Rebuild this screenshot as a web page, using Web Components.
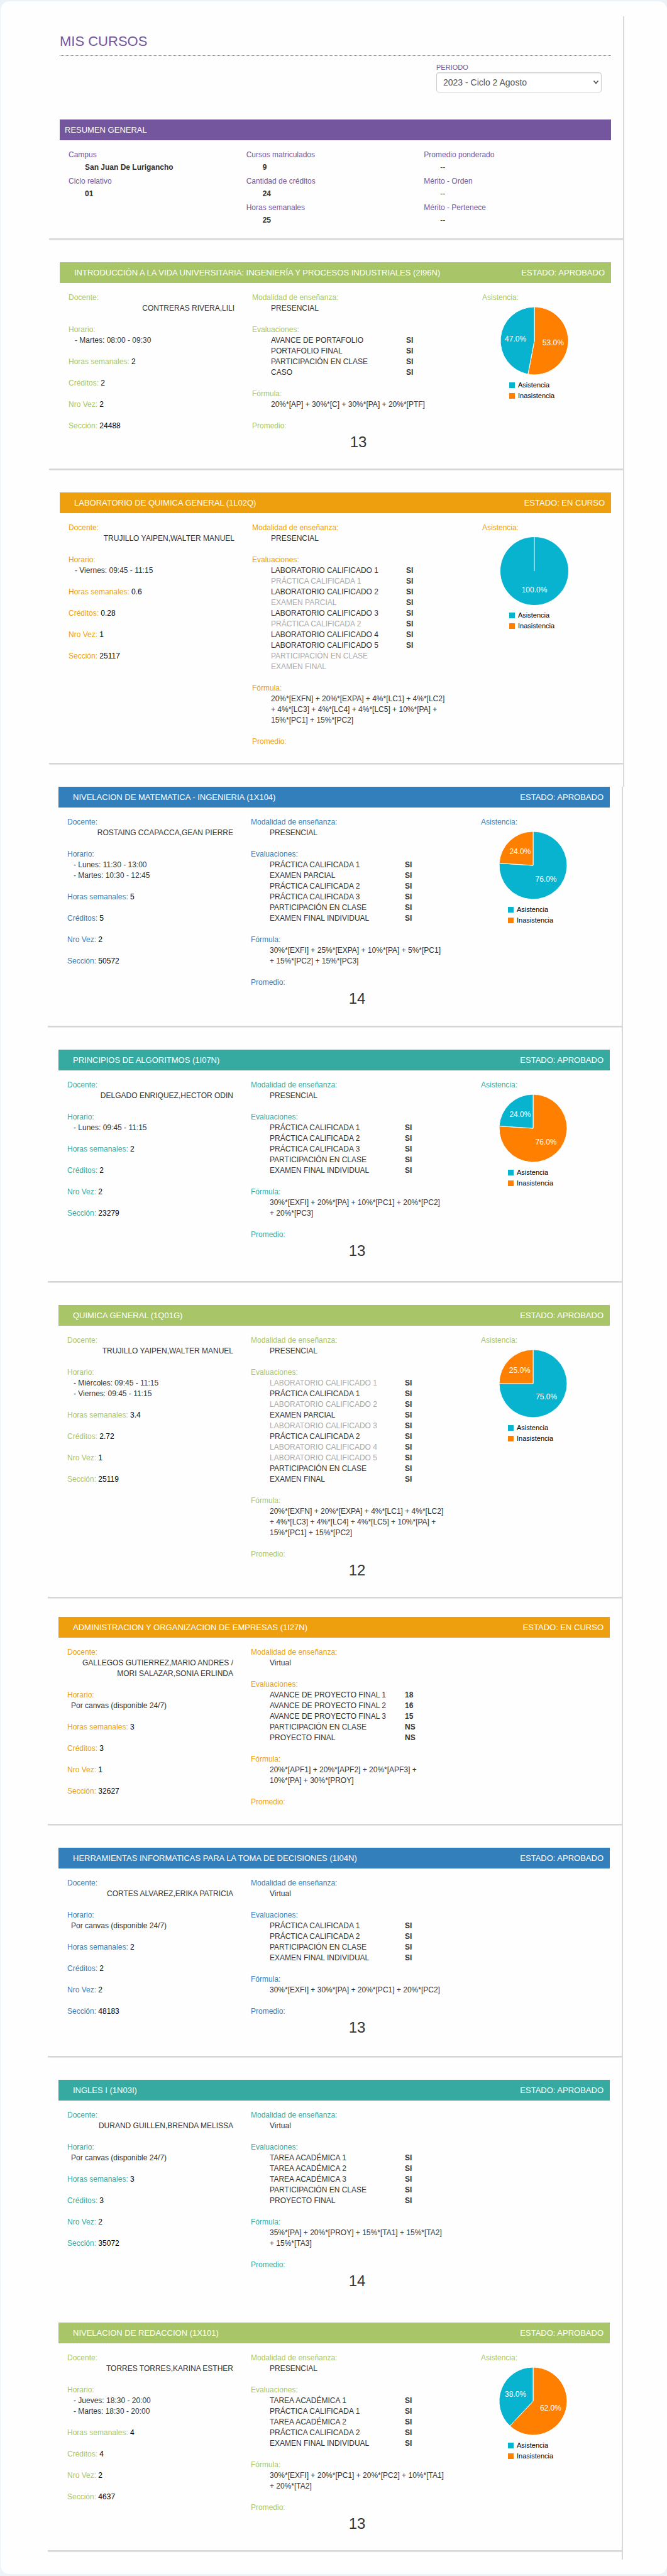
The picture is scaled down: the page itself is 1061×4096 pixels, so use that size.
<!DOCTYPE html>
<html lang="es">
<head>
<meta charset="utf-8">
<meta name="viewport" content="width=device-width, initial-scale=1">
<title>Mis cursos</title>
<style>
  body {
    margin: 0;
    padding: 2px 0 3px 1px;
    background: #ebf3f9;
    color: #333;
    font: 12px/17px "Liberation Sans", Arial, Helvetica, sans-serif;
  }
</style>
</head>
<body>
<page-card>
  <sheet-part id="first">
    <page-heading>MIS CURSOS</page-heading>
    <period-picker></period-picker>
    <general-summary></general-summary>
  </sheet-part>
  <sheet-part id="second" shifted last></sheet-part>
</page-card>

<script>
const shadow = (host, html) => {
  const root = host.attachShadow({ mode: "open" });
  root.innerHTML = html;
  return root;
};

/* White rounded card that holds the whole page */
customElements.define("page-card", class extends HTMLElement {
  constructor() {
    super();
    shadow(this, `
      <style>
        :host { display: block; background: #fefefe; border-radius: 14px; padding: 24px 0 23px; }
      </style>
      <main><slot></slot></main>`);
  }
});

/* Stretch of the page with the vertical rule on its right */
customElements.define("sheet-part", class extends HTMLElement {
  constructor() {
    super();
    shadow(this, `
      <style>
        :host { display: flow-root; margin: 0 68px 0 77px; border-right: 2px solid #d8d8d8; }
        :host([shifted]) { margin: 0 70px 0 75px; }
        :host([last]) { padding-bottom: 12px; }
      </style>
      <slot></slot>`);
  }
});

customElements.define("page-heading", class extends HTMLElement {
  constructor() {
    super();
    shadow(this, `
      <style>
        :host { display: block; padding: 26px 19px 0 17px; }
        h1 { margin: 0; padding-bottom: 8px; border-bottom: 1px dotted #74569e;
             font-size: 22px; line-height: 28px; font-weight: 400; color: #74569e; }
      </style>
      <h1><slot></slot></h1>`);
  }
});

customElements.define("period-picker", class extends HTMLElement {
  constructor() {
    super();
    shadow(this, `
      <style>
        :host { display: flex; flex-direction: column; align-items: flex-end; padding: 11px 34px 43px 0; }
        .field { display: grid; width: 263px; }
        label { font-size: 11px; line-height: 15px; color: #74569e; }
        select, svg { grid-area: 2 / 1; }
        select { appearance: none; box-sizing: border-box; width: 100%; height: 32px; margin: 0; padding: 0 10px;
                 border: 1px solid #ccc; border-radius: 4px; background: #fff; color: #555;
                 font: 14px/20px "Liberation Sans", Arial, sans-serif;
                 box-shadow: inset 0 1px 1px rgba(0, 0, 0, .08); }
        svg { justify-self: end; align-self: center; margin-right: 4px; pointer-events: none; }
      </style>
      <div class="field">
        <label for="period">PERIODO</label>
        <select id="period"><option>2023 - Ciclo 2 Agosto</option></select>
        <svg width="10" height="8" viewBox="0 0 10 8" fill="none" stroke="#444" stroke-width="1.5"><path d="M1.5 1.5 5 5.5 8.5 1.5"/></svg>
      </div>`);
  }
});

/* Coloured title bar: main text on the left, status on the right */
customElements.define("section-bar", class extends HTMLElement {
  constructor() {
    super();
    shadow(this, `
      <style>
        :host { display: flex; justify-content: space-between; align-items: center; height: 33px;
                padding: 0 10px 0 23px; background: var(--accent); color: #fff; font-size: 13px; }
        :host([plain]) { padding-left: 8px; }
        h2 { margin: 0; font: inherit; }
      </style>
      <h2><slot></slot></h2><slot name="status"></slot>`);
  }
});

customElements.define("soft-rule", class extends HTMLElement {
  constructor() {
    super();
    shadow(this, `
      <style>
        :host { display: block; height: 2px; background: #d6d6d6; box-shadow: 0 1px 1px rgba(0, 0, 0, .1); }
      </style>`);
  }
});

customElements.define("general-summary", class extends HTMLElement {
  constructor() {
    super();
    const columns = [
      [["Campus", "San Juan De Lurigancho"], ["Ciclo relativo", "01"]],
      [["Cursos matriculados", "9"], ["Cantidad de créditos", "24"], ["Horas semanales", "25"]],
      [["Promedio ponderado", "--"], ["Mérito - Orden", "--"], ["Mérito - Pertenece", "--"]]
    ];
    const list = rows => `<dl>${rows.map(([k, v]) =>
      `<div><dt>${k}</dt><dd class="${v === "--" ? "none" : ""}">${v}</dd></div>`).join("")}</dl>`;
    shadow(this, `
      <style>
        :host { display: block; --accent: #74569e; }
        section { padding: 0 19px 0 17px; }
        .columns { display: grid; grid-template-columns: repeat(3, 1fr); padding: 13px 15px 19px 14px; }
        dl { display: flex; flex-direction: column; gap: 2px; margin: 0; line-height: 20px; }
        dt { color: var(--accent); }
        dd { margin: 0 0 0 26px; font-weight: 700; }
        .none { font-weight: 400; }
        soft-rule { margin-bottom: 36px; }
      </style>
      <section>
        <section-bar plain>RESUMEN GENERAL</section-bar>
        <div class="columns">${columns.map(list).join("")}</div>
      </section>
      <soft-rule></soft-rule>`);
  }
});

/* Pie of attended and missed classes; the larger slice starts at twelve o'clock */
customElements.define("attendance-pie", class extends HTMLElement {
  connectedCallback() {
    if (this.shadowRoot) return;
    const attended = Number(this.getAttribute("attended"));
    const slices = [{ v: attended, c: "#07b3cf" }, { v: 100 - attended, c: "#ff8000" }]
      .filter(s => s.v > 0).sort((a, b) => b.v - a.v);
    const at = (share, r) => {
      const a = share / 100 * 2 * Math.PI;
      return [55 + r * Math.sin(a), 55 - r * Math.cos(a)];
    };
    let from = 0, shapes = "", texts = "";
    for (const s of slices) {
      const [x1, y1] = at(from, 54), [x2, y2] = at(from + s.v, 54);
      shapes += s.v === 100
        ? `<circle cx="55" cy="55" r="54" fill="${s.c}"/><path d="M55 55V1" stroke="#fff"/>`
        : `<path d="M55 55L${x1} ${y1}A54 54 0 ${s.v > 50 ? 1 : 0} 1 ${x2} ${y2}Z" fill="${s.c}" stroke="#fff"/>`;
      const [tx, ty] = at(from + s.v / 2, 30);
      texts += `<text x="${tx}" y="${ty + 4}">${s.v.toFixed(1)}%</text>`;
      from += s.v;
    }
    shadow(this, `
      <style>
        :host { display: block; }
        svg { display: block; margin: 5px 0 7px 28px; }
        text { fill: #fff; font-size: 12px; text-anchor: middle; }
        ul { list-style: none; margin: 0 0 0 43px; padding: 0; color: #000; font-size: 11px; }
        li { display: flex; align-items: center; gap: 5px; }
        i { width: 9px; height: 9px; background: #07b3cf; }
        .missed { background: #ff8000; }
      </style>
      <svg width="110" height="110" viewBox="0 0 110 110">${shapes}${texts}</svg>
      <ul><li><i></i>Asistencia</li><li><i class="missed"></i>Inasistencia</li></ul>`);
  }
});

const themes = { green: "#a8c668", orange: "#ed9f0e", blue: "#337fbc", teal: "#36aaa0" };

customElements.define("course-card", class extends HTMLElement {
  set course(c) {
    const item = ([name, mark, dim]) =>
      `<tr><td class="${dim ? "dim" : ""}">${name}</td><th>${mark}</th></tr>`;
    const short = (label, value) => `<p class="short">${label}: <b>${value}</b></p>`;
    shadow(this, `
      <style>
        :host { display: block; --accent: ${themes[c.theme]}; }
        article { padding: 0 19px 0 17px; }
        .body { display: grid; grid-template-columns: 292fr 366fr 205fr; padding: 15px 0 ${c.before || 25}px 14px; }
        .body > div { min-width: 0; }
        .facts, .marks { display: flex; flex-direction: column; gap: 17px; padding-right: 28px; }
        h3 { margin: 0; font: inherit; color: var(--accent); }
        p { margin: 0; }
        .teacher { text-align: right; }
        .slot { padding-left: 10px; }
        .online { padding-left: 6px; }
        .short { color: var(--accent); }
        .short b { color: #000; font-weight: 400; }
        .indent { margin-left: 30px; white-space: nowrap; }
        table { border-collapse: collapse; table-layout: fixed; width: 300px; margin-left: 30px; }
        td, th { padding: 0; text-align: left; white-space: nowrap; }
        td { width: 215px; }
        .dim { color: #aaa; }
        .grade { font-size: 24px; line-height: 34px; text-align: center; }
        soft-rule { margin-bottom: ${c.after || 36}px; }
      </style>
      <article>
        <section-bar>${c.name}<span slot="status">ESTADO: ${c.status}</span></section-bar>
        <div class="body">
          <div class="facts">
            <div><h3>Docente:</h3>${c.teacher.map(t => `<p class="teacher">${t}</p>`).join("")}</div>
            <div><h3>Horario:</h3>${c.times
              ? c.times.map(t => `<p class="slot">- ${t}</p>`).join("")
              : `<p class="online">Por canvas (disponible 24/7)</p>`}</div>
            ${short("Horas semanales", c.facts[0])}${short("Créditos", c.facts[1])}
            ${short("Nro Vez", c.facts[2])}${short("Sección", c.facts[3])}
          </div>
          <div class="marks">
            <div><h3>Modalidad de enseñanza:</h3><p class="indent">${c.times ? "PRESENCIAL" : "Virtual"}</p></div>
            <div><h3>Evaluaciones:</h3><table>${c.items.map(item).join("")}</table></div>
            <div><h3>Fórmula:</h3><p class="indent">${c.formula.join("<br>")}</p></div>
            <div><h3>Promedio:</h3>${c.grade ? `<p class="grade">${c.grade}</p>` : ""}</div>
          </div>
          ${c.attended === undefined ? "" : `<div><h3>Asistencia:</h3><attendance-pie attended="${c.attended}"></attendance-pie></div>`}
        </div>
      </article>
      ${c.noRule ? "" : "<soft-rule></soft-rule>"}`);
  }
});

const si = names => names.map(n => [n.replace("~", ""), "SI", n[0] === "~"]);
const courses = [
  { theme: "green", name: "INTRODUCCIÓN A LA VIDA UNIVERSITARIA: INGENIERÍA Y PROCESOS INDUSTRIALES (2I96N)", status: "APROBADO",
    teacher: ["CONTRERAS RIVERA,LILI"], times: ["Martes: 08:00 - 09:30"], facts: ["2", "2", "2", "24488"],
    items: si(["AVANCE DE PORTAFOLIO", "PORTAFOLIO FINAL", "PARTICIPACIÓN EN CLASE", "CASO"]),
    formula: ["20%*[AP] + 30%*[C] + 30%*[PA] + 20%*[PTF]"], grade: 13, attended: 47 },
  { theme: "orange", name: "LABORATORIO DE QUIMICA GENERAL (1L02Q)", status: "EN CURSO",
    teacher: ["TRUJILLO YAIPEN,WALTER MANUEL"], times: ["Viernes: 09:45 - 11:15"], facts: ["0.6", "0.28", "1", "25117"],
    items: [...si(["LABORATORIO CALIFICADO 1", "~PRÁCTICA CALIFICADA 1", "LABORATORIO CALIFICADO 2", "~EXAMEN PARCIAL",
      "LABORATORIO CALIFICADO 3", "~PRÁCTICA CALIFICADA 2", "LABORATORIO CALIFICADO 4", "LABORATORIO CALIFICADO 5"]),
      ["PARTICIPACIÓN EN CLASE", "", true], ["EXAMEN FINAL", "", true]],
    formula: ["20%*[EXFN] + 20%*[EXPA] + 4%*[LC1] + 4%*[LC2]", "+ 4%*[LC3] + 4%*[LC4] + 4%*[LC5] + 10%*[PA] +", "15%*[PC1] + 15%*[PC2]"],
    attended: 100 },
  { theme: "blue", name: "NIVELACION DE MATEMATICA - INGENIERIA (1X104)", status: "APROBADO", before: 26,
    teacher: ["ROSTAING CCAPACCA,GEAN PIERRE"], times: ["Lunes: 11:30 - 13:00", "Martes: 10:30 - 12:45"], facts: ["5", "5", "2", "50572"],
    items: si(["PRÁCTICA CALIFICADA 1", "EXAMEN PARCIAL", "PRÁCTICA CALIFICADA 2", "PRÁCTICA CALIFICADA 3", "PARTICIPACIÓN EN CLASE", "EXAMEN FINAL INDIVIDUAL"]),
    formula: ["30%*[EXFI] + 25%*[EXPA] + 10%*[PA] + 5%*[PC1]", "+ 15%*[PC2] + 15%*[PC3]"], grade: 14, attended: 76 },
  { theme: "teal", name: "PRINCIPIOS DE ALGORITMOS (1I07N)", status: "APROBADO", before: 31,
    teacher: ["DELGADO ENRIQUEZ,HECTOR ODIN"], times: ["Lunes: 09:45 - 11:15"], facts: ["2", "2", "2", "23279"],
    items: si(["PRÁCTICA CALIFICADA 1", "PRÁCTICA CALIFICADA 2", "PRÁCTICA CALIFICADA 3", "PARTICIPACIÓN EN CLASE", "EXAMEN FINAL INDIVIDUAL"]),
    formula: ["30%*[EXFI] + 20%*[PA] + 10%*[PC1] + 20%*[PC2]", "+ 20%*[PC3]"], grade: 13, attended: 24 },
  { theme: "green", name: "QUIMICA GENERAL (1Q01G)", status: "APROBADO", after: 30,
    teacher: ["TRUJILLO YAIPEN,WALTER MANUEL"], times: ["Miércoles: 09:45 - 11:15", "Viernes: 09:45 - 11:15"], facts: ["3.4", "2.72", "1", "25119"],
    items: si(["~LABORATORIO CALIFICADO 1", "PRÁCTICA CALIFICADA 1", "~LABORATORIO CALIFICADO 2", "EXAMEN PARCIAL", "~LABORATORIO CALIFICADO 3",
      "PRÁCTICA CALIFICADA 2", "~LABORATORIO CALIFICADO 4", "~LABORATORIO CALIFICADO 5", "PARTICIPACIÓN EN CLASE", "EXAMEN FINAL"]),
    formula: ["20%*[EXFN] + 20%*[EXPA] + 4%*[LC1] + 4%*[LC2]", "+ 4%*[LC3] + 4%*[LC4] + 4%*[LC5] + 10%*[PA] +", "15%*[PC1] + 15%*[PC2]"],
    grade: 12, attended: 75 },
  { theme: "orange", name: "ADMINISTRACION Y ORGANIZACION DE EMPRESAS (1I27N)", status: "EN CURSO", before: 26,
    teacher: ["GALLEGOS GUTIERREZ,MARIO ANDRES /", "MORI SALAZAR,SONIA ERLINDA"], facts: ["3", "3", "1", "32627"],
    items: [["AVANCE DE PROYECTO FINAL 1", "18"], ["AVANCE DE PROYECTO FINAL 2", "16"], ["AVANCE DE PROYECTO FINAL 3", "15"],
      ["PARTICIPACIÓN EN CLASE", "NS"], ["PROYECTO FINAL", "NS"]],
    formula: ["20%*[APF1] + 20%*[APF2] + 20%*[APF3] +", "10%*[PA] + 30%*[PROY]"] },
  { theme: "blue", name: "HERRAMIENTAS INFORMATICAS PARA LA TOMA DE DECISIONES (1I04N)", status: "APROBADO", before: 28,
    teacher: ["CORTES ALVAREZ,ERIKA PATRICIA"], facts: ["2", "2", "2", "48183"],
    items: si(["PRÁCTICA CALIFICADA 1", "PRÁCTICA CALIFICADA 2", "PARTICIPACIÓN EN CLASE", "EXAMEN FINAL INDIVIDUAL"]),
    formula: ["30%*[EXFI] + 30%*[PA] + 20%*[PC1] + 20%*[PC2]"], grade: 13 },
  { theme: "teal", name: "INGLES I (1N03I)", status: "APROBADO", before: 49, noRule: true,
    teacher: ["DURAND GUILLEN,BRENDA MELISSA"], facts: ["3", "3", "2", "35072"],
    items: si(["TAREA ACADÉMICA 1", "TAREA ACADÉMICA 2", "TAREA ACADÉMICA 3", "PARTICIPACIÓN EN CLASE", "PROYECTO FINAL"]),
    formula: ["35%*[PA] + 20%*[PROY] + 15%*[TA1] + 15%*[TA2]", "+ 15%*[TA3]"], grade: 14 },
  { theme: "green", name: "NIVELACION DE REDACCION (1X101)", status: "APROBADO", after: 1,
    teacher: ["TORRES TORRES,KARINA ESTHER"], times: ["Jueves: 18:30 - 20:00", "Martes: 18:30 - 20:00"], facts: ["4", "4", "2", "4637"],
    items: si(["TAREA ACADÉMICA 1", "PRÁCTICA CALIFICADA 1", "TAREA ACADÉMICA 2", "PRÁCTICA CALIFICADA 2", "EXAMEN FINAL INDIVIDUAL"]),
    formula: ["30%*[EXFI] + 20%*[PC1] + 20%*[PC2] + 10%*[TA1]", "+ 20%*[TA2]"], grade: 13, attended: 38 }
];

courses.forEach((course, i) => {
  const card = document.createElement("course-card");
  card.course = course;
  document.getElementById(i < 2 ? "first" : "second").append(card);
});
</script>
</body>
</html>
